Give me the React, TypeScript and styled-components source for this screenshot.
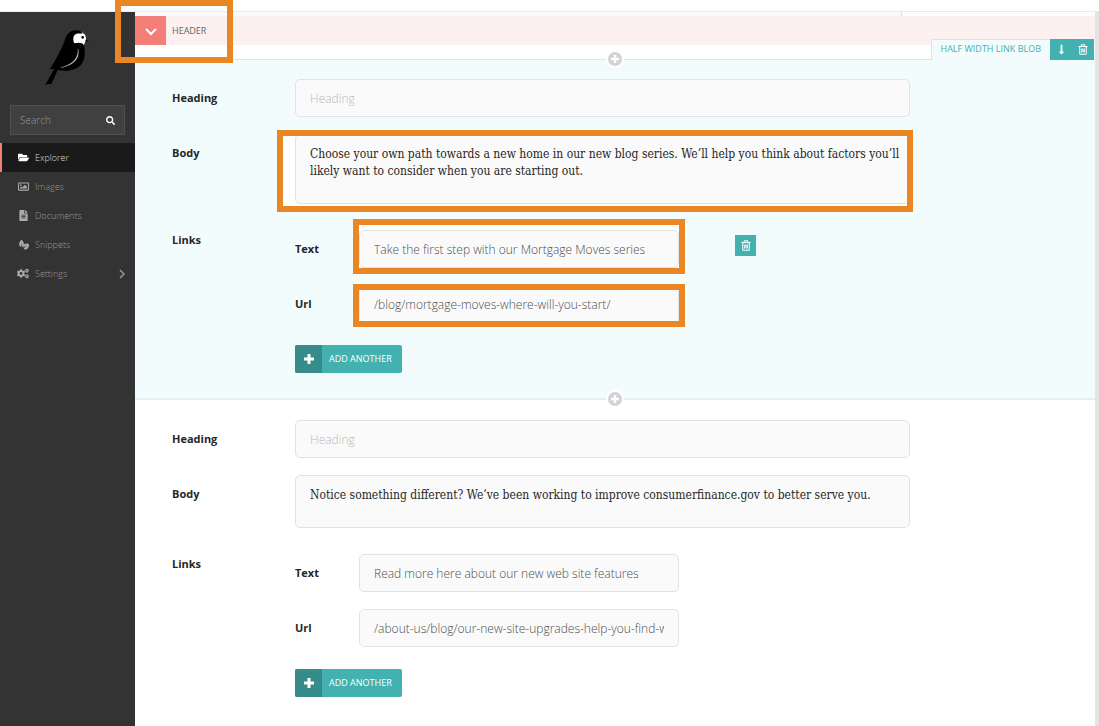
import React, { useId } from "react";
import styled, { createGlobalStyle, css } from "styled-components";
import {
  FaCogs,
  FaFileAlt,
  FaFolderOpen,
  FaLongArrowAltDown,
  FaPlus,
  FaRegImage,
  FaSearch,
} from "react-icons/fa";

const teal = "#43b1b0";
const tealDark = "#358c8b";
const salmon = "#f37e77";
const orange = "#e98724";

const GlobalStyle = createGlobalStyle`
  * { box-sizing: border-box; }
  body {
    margin: 0;
    background: #fff;
    color: #333;
    font-family: "Open Sans", sans-serif;
    font-size: 12px;
    line-height: 18px;
  }
  button, input, textarea { font: inherit; margin: 0; }
  button { cursor: pointer; border: 0; padding: 0; }
`;

const Page = styled.div`
  display: flex;
  flex-direction: column;
  min-height: 100vh;
`;

const TopStrip = styled.div`
  height: 12px;
  border-bottom: 1px solid #e9e9e9;
`;

const Shell = styled.div`
  display: flex;
  flex: 1;
`;

const Sidebar = styled.aside`
  flex: 0 0 135px;
  min-width: 0;
  background: #333;
`;

const LogoLink = styled.a`
  display: block;
  padding: 8px 30px 0;
  svg { display: block; }
`;

const SearchForm = styled.form`
  display: flex;
  align-items: center;
  height: 30px;
  margin: 10px 10px 8px;
  padding: 0 9px;
  background: #404040;
  border: 1px solid #505050;
`;

const SearchInput = styled.input`
  flex: 1;
  width: 100%;
  min-width: 0;
  padding: 0;
  border: 0;
  outline: 0;
  background: transparent;
  color: #ccc;
  font-size: 10px;
  font-weight: 300;
  &::placeholder { color: #999; opacity: 1; }
`;

const SearchButton = styled.button`
  display: flex;
  background: transparent;
  color: #fff;
  font-size: 9px;
`;

const NavLink = styled.a<{ $active?: boolean }>`
  display: flex;
  align-items: center;
  gap: 6px;
  height: 29px;
  padding: 0 10px 0 15px;
  border-left: 2px solid ${(p) => (p.$active ? salmon : "transparent")};
  background: ${(p) => (p.$active ? "#1a1a1a" : "transparent")};
  color: ${(p) => (p.$active ? "#ddd" : "#999")};
  font-size: 9px;
  font-weight: 300;
  text-decoration: none;
`;

const NavIcon = styled.span<{ $active?: boolean }>`
  display: flex;
  justify-content: center;
  width: 12px;
  color: ${(p) => (p.$active ? "#fff" : "#aaa")};
  font-size: 11px;
`;

const NavText = styled.span`
  flex: 1;
`;

const Main = styled.main`
  flex: 1;
  min-width: 0;
`;

const Gutter = styled.div`
  flex: 0 0 4px;
  background: #e4e4e4;
`;

const PanelEdge = styled.div`
  height: 4px;
  margin-right: 193px;
  background: #fafafa;
  border-right: 1px solid #ddd;
`;

const HeaderBar = styled.header`
  position: relative;
  display: flex;
  align-items: center;
  height: 29px;
  margin-bottom: 14px;
  background: #fcf1f0;
`;

const CollapseButton = styled.button`
  display: flex;
  align-items: center;
  justify-content: center;
  width: 31px;
  height: 29px;
  padding-top: 3px;
  background: ${salmon};
  color: #fff;
`;

const HeaderTitle = styled.h2`
  margin: 0 0 0 6px;
  color: #666;
  font-size: 9px;
  font-weight: 400;
`;

const HeaderMark = styled.div`
  position: absolute;
  z-index: 3;
  top: -16px;
  left: -20px;
  width: 118px;
  height: 63px;
  border: 6px solid ${orange};
  pointer-events: none;
`;

const Block = styled.section<{ $tinted?: boolean }>`
  position: relative;
  padding: 20px 185px 25px 37px;
  ${(p) =>
    p.$tinted &&
    css`
      padding-top: 19px;
      background: #f3fcfd;
      border-top: 1px solid #c9edef;
      border-bottom: 2px solid #dff2f5;
    `}
`;

const Fields = styled.div`
  display: grid;
  row-gap: 17px;
`;

const InsertButton = styled.button<{ $edge: "top" | "bottom" }>`
  position: absolute;
  z-index: 1;
  ${(p) => p.$edge}: -10px;
  left: calc(50% - 9px);
  display: flex;
  align-items: center;
  justify-content: center;
  width: 18px;
  height: 18px;
  border: 2px solid #fff;
  border-radius: 50%;
  background: #d3d3d3;
  color: #fff;
`;

const BlockTab = styled.div`
  position: absolute;
  top: -21px;
  right: 1px;
  display: flex;
  height: 21px;
`;

const BlockName = styled.span`
  padding: 0 9px;
  border: 1px solid #c9edef;
  border-width: 1px 0 0 1px;
  background: #f3fcfd;
  color: ${teal};
  font-size: 9px;
  line-height: 18px;
`;

const TabButton = styled.button`
  display: flex;
  align-items: center;
  justify-content: center;
  width: 22px;
  height: 21px;
  background: ${teal};
  color: #fff;
  font-size: 11px;
`;

const Row = styled.div<{ $label: number }>`
  display: grid;
  grid-template-columns: ${(p) => p.$label}px minmax(0, 1fr);
`;

const rowLabel = css`
  color: #262626;
  font-size: 11px;
  font-weight: 700;
  line-height: 38px;
`;

const Label = styled.label`
  ${rowLabel}
`;

const GroupLabel = styled.span`
  ${rowLabel}
`;

/* The orange frame is drawn over the control, its white backing under it. */
const Control = styled.div<{ $mark?: string }>`
  position: relative;
  display: flex;
  ${(p) =>
    p.$mark &&
    css`
      &::before,
      &::after {
        content: "";
        position: absolute;
        inset: ${p.$mark};
        pointer-events: none;
      }
      &::before { background: #fff; }
      &::after { z-index: 2; border: 6px solid ${orange}; }
    `}
`;

const box = css`
  position: relative;
  width: 100%;
  border: 1px solid #e3e3e3;
  border-radius: 5px;
  outline: 0;
  background: #fafafa;
`;

const TextInput = styled.input`
  ${box}
  height: 38px;
  padding: 0 14px;
  color: #4d4d4d;
  font-size: 12px;
  font-weight: 300;
  &::placeholder { color: #b8b8b8; opacity: 1; }
`;

const TextArea = styled.textarea<{ $tall?: boolean }>`
  ${box}
  height: ${(p) => (p.$tall ? 70 : 53)}px;
  padding: 11px 6px 0 14px;
  overflow: hidden;
  resize: none;
  color: #262626;
  font-family: "Roboto Slab", "DejaVu Serif Condensed", "DejaVu Serif", serif;
  font-size: 12px;
  line-height: 17px;
`;

const LinkGroup = styled.div`
  display: flex;
  align-items: flex-start;
  padding-top: 9px;
`;

const LinkFields = styled.div`
  display: grid;
  flex: 1;
  row-gap: 17px;
  max-width: 384px;
`;

const DeleteButton = styled.button`
  display: flex;
  align-items: center;
  justify-content: center;
  width: 21px;
  height: 21px;
  margin: 5px 0 0 56px;
  background: ${teal};
  color: #fff;
`;

const AddButton = styled.button`
  display: flex;
  align-items: center;
  justify-self: start;
  height: 28px;
  margin-top: 5px;
  padding-right: 10px;
  overflow: hidden;
  border-radius: 2px;
  background: ${teal};
  color: #fff;
  font-size: 9px;
`;

const AddIcon = styled.span`
  display: flex;
  align-items: center;
  justify-content: center;
  width: 27px;
  height: 28px;
  margin-right: 7px;
  background: ${tealDark};
`;

const Bird = () => (
  <svg width="70" height="75" viewBox="0 0 210 225" aria-hidden="true">
    <path
      d="M60 147C78 118 94 88 104 62C109 43 119 32 137 31C147 30 155 34 160 41C168 50 166 62 162 73C166 94 166 119 153 135C138 151 108 156 83 150L64 193C57 191 51 193 45 196L72 148Z"
      fill="#000"
    />
    <path
      d="M155 34L158 40C163 40 168 47 168 57C168 64 164 66 162 76C158 68 146 67 133 70C128 59 129 46 138 42C144 39 152 41 156 41Z"
      fill="#fff"
    />
    <circle cx="158" cy="52" r="4" fill="#000" />
    <path d="M168 59L177 64L166 64Z" fill="#000" />
    <path d="M144 86C149 111 138 134 92 143C134 132 145 110 144 86Z" fill="#ddd" stroke="#999" strokeWidth="1" />
  </svg>
);

const PlusIcon = ({ size }: { size: number }) => (
  <svg width={size} height={size} viewBox="0 0 10 10" stroke="currentColor" strokeWidth="3" aria-hidden="true">
    <path d="M5 0V10M0 5H10" />
  </svg>
);

const ChevronDownIcon = () => (
  <svg width="12" height="8" viewBox="0 0 12 8" fill="none" stroke="currentColor" strokeWidth="2" aria-hidden="true">
    <path d="M1 1L6 6L11 1" />
  </svg>
);

const ChevronRightIcon = () => (
  <svg width="6" height="10" viewBox="0 0 6 10" fill="none" stroke="currentColor" strokeWidth="1.5" aria-hidden="true">
    <path d="M1 1L5 5L1 9" />
  </svg>
);

const TrashIcon = () => (
  <svg width="10" height="11" viewBox="0 0 20 22" fill="none" stroke="currentColor" strokeWidth="2" aria-hidden="true">
    <path d="M1 5H19M6.500 4.500V1.500H13.500V4.500M3.500 5V20.500H16.500V5M7.500 9V17M10 9V17M12.500 9V17" />
  </svg>
);

const SnippetIcon = () => (
  <svg width="11" height="11" viewBox="0 0 22 22" fill="currentColor" aria-hidden="true">
    <path d="M7 1C11 5 13 9 11 14L8 16L8 8L6 16C1 14 1 7 7 1Z" />
    <path d="M13 10C17 8 20 9 22 10C22 16 20 21 15 21C13 21 12 20 11 19L18 13L10 17C10 14 11 11 13 10Z" />
  </svg>
);

const navItems = [
  { label: "Explorer", icon: <FaFolderOpen />, active: true },
  { label: "Images", icon: <FaRegImage /> },
  { label: "Documents", icon: <FaFileAlt /> },
  { label: "Snippets", icon: <SnippetIcon /> },
  { label: "Settings", icon: <FaCogs size={13} />, more: true },
];

interface LinkBlobProps {
  body: string;
  text: string;
  url: string;
  featured?: boolean;
}

const LinkBlob = ({ body, text, url, featured }: LinkBlobProps) => {
  const id = useId();
  return (
    <Block $tinted={featured}>
      {featured && (
        <>
          <InsertButton $edge="top" type="button" aria-label="Insert block before">
            <PlusIcon size={8} />
          </InsertButton>
          <BlockTab>
            <BlockName>HALF WIDTH LINK BLOB</BlockName>
            <TabButton type="button" aria-label="Move down">
              <FaLongArrowAltDown />
            </TabButton>
            <TabButton type="button" aria-label="Delete block">
              <TrashIcon />
            </TabButton>
          </BlockTab>
          <InsertButton $edge="bottom" type="button" aria-label="Insert block after">
            <PlusIcon size={8} />
          </InsertButton>
        </>
      )}
      <Fields>
        <Row $label={123}>
          <Label htmlFor={id + "heading"}>Heading</Label>
          <Control>
            <TextInput id={id + "heading"} placeholder="Heading" />
          </Control>
        </Row>
        <Row $label={123}>
          <Label htmlFor={id + "body"}>Body</Label>
          <Control $mark={featured ? "-4px -3px -8px -18px" : undefined}>
            <TextArea id={id + "body"} $tall={featured} defaultValue={body} spellCheck={false} />
          </Control>
        </Row>
        <Row $label={123}>
          <GroupLabel>Links</GroupLabel>
          <LinkGroup>
            <LinkFields>
              <Row $label={64}>
                <Label htmlFor={id + "text"}>Text</Label>
                <Control $mark={featured ? "-11px -6px -6px -6px" : undefined}>
                  <TextInput id={id + "text"} defaultValue={text} />
                </Control>
              </Row>
              <Row $label={64}>
                <Label htmlFor={id + "url"}>Url</Label>
                <Control $mark={featured ? "-1px -6px -4px -6px" : undefined}>
                  <TextInput id={id + "url"} defaultValue={url} />
                </Control>
              </Row>
              <AddButton type="button">
                <AddIcon>
                  <PlusIcon size={10} />
                </AddIcon>
                ADD ANOTHER
              </AddButton>
            </LinkFields>
            {featured && (
              <DeleteButton type="button" aria-label="Delete link">
                <TrashIcon />
              </DeleteButton>
            )}
          </LinkGroup>
        </Row>
      </Fields>
    </Block>
  );
};

export default function App() {
  return (
    <>
      <GlobalStyle />
      <Page>
        <TopStrip />
        <Shell>
          <Sidebar>
            <LogoLink href="#" aria-label="Dashboard">
              <Bird />
            </LogoLink>
            <SearchForm role="search">
              <SearchInput type="text" placeholder="Search" aria-label="Search" />
              <SearchButton type="button" aria-label="Run search">
                <FaSearch />
              </SearchButton>
            </SearchForm>
            <nav>
              {navItems.map((item) => (
                <NavLink key={item.label} href="#" $active={item.active}>
                  <NavIcon $active={item.active}>{item.icon}</NavIcon>
                  <NavText>{item.label}</NavText>
                  {item.more && <ChevronRightIcon />}
                </NavLink>
              ))}
            </nav>
          </Sidebar>
          <Main>
            <PanelEdge />
            <HeaderBar>
              <CollapseButton type="button" aria-label="Collapse header">
                <ChevronDownIcon />
              </CollapseButton>
              <HeaderTitle>HEADER</HeaderTitle>
              <HeaderMark />
            </HeaderBar>
            <LinkBlob
              featured
              body="Choose your own path towards a new home in our new blog series. We’ll help you think about factors you’ll likely want to consider when you are starting out."
              text="Take the first step with our Mortgage Moves series"
              url="/blog/mortgage-moves-where-will-you-start/"
            />
            <LinkBlob
              body="Notice something different? We’ve been working to improve consumerfinance.gov to better serve you."
              text="Read more here about our new web site features"
              url="/about-us/blog/our-new-site-upgrades-help-you-find-what-you-need/"
            />
          </Main>
          <Gutter />
        </Shell>
      </Page>
    </>
  );
}
